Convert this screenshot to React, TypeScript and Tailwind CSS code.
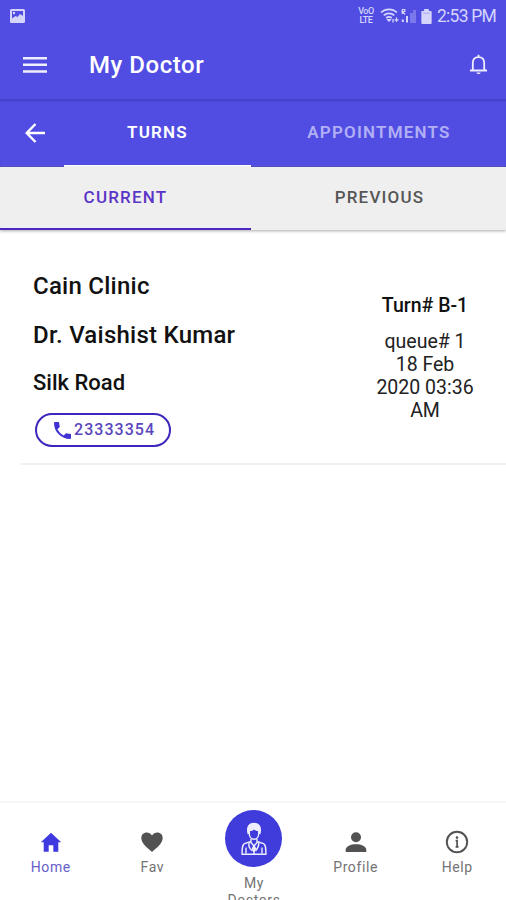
import { ReactNode } from 'react';

function HomeIcon() {
  return (
    <svg viewBox="0 0 24 24" className="h-6 w-6" fill="currentColor">
      <path d="M12 2.800 1.800 12.200h2.900v9.600h5v-6.600h4.600v6.600h5v-9.600h2.900z" />
    </svg>
  );
}

function HeartIcon() {
  return (
    <svg viewBox="0 0 24 24" className="h-6 w-6" fill="currentColor">
      <path d="M12 22C8 18.300 1.300 13.600 1.300 8c0-3.200 2.300-5.500 5.300-5.500 2.200 0 4.200 1.100 5.400 3.100 1.200-2 3.200-3.100 5.400-3.100 3 0 5.300 2.300 5.300 5.500C22.700 13.600 16 18.300 12 22z" />
    </svg>
  );
}

function PersonIcon() {
  return (
    <svg viewBox="0 0 24 24" className="h-6 w-6" fill="currentColor">
      <circle cx="12" cy="7.300" r="5" />
      <path d="M1.700 22v-2.200c0-3.600 5.200-5.600 10.300-5.600s10.300 2 10.300 5.600V22z" />
    </svg>
  );
}

function InfoIcon() {
  return (
    <svg viewBox="0 0 24 24" className="h-6 w-6" fill="none" stroke="currentColor" strokeWidth="1.900">
      <circle cx="12" cy="12" r="10.200" />
      <path d="M10.600 10.600h1.500v6.100M10.600 16.900h3" strokeWidth="1.700" />
      <circle cx="12" cy="7.600" r="1.300" fill="currentColor" stroke="none" />
    </svg>
  );
}

function DoctorIcon() {
  return (
    <svg viewBox="0 0 28 34" className="h-[34px] w-7" fill="none" stroke="#eeeeff" strokeWidth="1.400" strokeLinejoin="round">
      <path d="M8.300 12C6.500 5 9 1.500 14 1.500S21.500 5 19.700 12" fill="#eeeeff" />
      <path d="M9.300 8.500v3c0 3.200 1.900 5.700 4.700 5.700s4.700-2.500 4.700-5.700v-3c-1.700 0-3.700-.8-4.700-2-1 1.200-3 2-4.700 2z" fill="#403cdb" />
      <path d="M11 17v2.500l-6.500 2.200c-2 .8-2.300 3-2.500 10.500h24c-.2-7.500-.5-9.700-2.500-10.500L17 19.500V17" />
      <path d="m10.500 20 3.500 4 3.500-4M9.500 20.500c-2 3.500 0 6 3 8.500M18.500 20.500c1 3-1 6-3 8.500M6 25.500v6M22 25.500v6M14 28v4" />
      <path d="m14 23.500-1.500 3 1.500 3 1.500-3z" fill="#eeeeff" />
    </svg>
  );
}

function StatusBar() {
  return (
    <div className="flex h-8 items-center justify-between pl-[9px] pr-[10px] text-[#d5d5fc]">
      <svg viewBox="0 0 17 16" className="h-4 w-[17px]">
        <rect x="1" y="1" width="15" height="14" rx="1.500" fill="currentColor" />
        <path d="M3 3h11v5l-3-2-2.500 3-2-1L3 10.500z" fill="#514de3" />
        <circle cx="5" cy="5" r="1.200" fill="currentColor" />
      </svg>
      <div className="flex h-8 items-center">
        <div className="mr-[6px] w-4 text-center text-[9px] font-medium leading-[9px] tracking-[-0.400px]">
          <div>VoO</div>
          <div>LTE</div>
        </div>
        <svg viewBox="0 0 40 18" className="mr-px h-[18px] w-10" fill="none" stroke="currentColor">
          <path d="M1 5.500c4.500-4.300 11.500-4.300 16 0M3.700 8.400c3-2.800 7.600-2.800 10.600 0M6.200 11c1.700-1.400 3.900-1.400 5.600 0" strokeWidth="1.700" />
          <path d="m9 14.500-2-2h4z" fill="currentColor" />
          <path d="M13 12v3.500M16.500 10.500v4.500M14.500 12.800h4" strokeWidth="1.300" />
          <path d="M22.300 7V2.500h2.500v2h-2.500l2.800 2.800" strokeWidth="1.200" />
          <path d="M22.800 12.500V15M27 9v6.500" strokeWidth="2" />
          <path d="M31.500 16V6M34.500 16V3" strokeWidth="2.800" opacity=".35" />
        </svg>
        <svg viewBox="0 0 11 16" className="mr-[5px] h-[15px] w-[11px]" fill="currentColor">
          <path d="M3 0h5v2h2a1 1 0 0 1 1 1v12a1 1 0 0 1-1 1H1a1 1 0 0 1-1-1V3a1 1 0 0 1 1-1h2z" />
          <path d="M2 4.500h7" stroke="#a5a2f5" />
        </svg>
        <span className="w-[59px] whitespace-nowrap text-[17.500px] tracking-[-0.750px]">2:53 PM</span>
      </div>
    </div>
  );
}

function NavItem({ icon, label, active }: { icon: ReactNode; label: string; active?: boolean }) {
  return (
    <button
      className={`flex flex-1 flex-col items-center pt-[27px] text-[14px] leading-[18px] tracking-[0.600px] ${
        active ? 'text-[#6660c8]' : 'text-[#737373]'
      }`}
    >
      <span className={active ? 'text-[#3f3ae0]' : 'text-[#525252]'}>{icon}</span>
      <span className="mt-[4px]">{label}</span>
    </button>
  );
}

export default function App() {
  return (
    <div className="flex h-[900px] w-[506px] flex-col overflow-hidden bg-white font-[Roboto,sans-serif] text-[#111]">
      {/* Header */}
      <header className="h-[99px] shrink-0 bg-[#514de3] text-white">
        <StatusBar />
        <div className="flex h-[65px] items-center pl-[23px] pr-[18px]">
          <svg viewBox="0 0 24 18" className="h-[18px] w-6" stroke="#eeeeff" strokeWidth="2.400">
            <path d="M0 2.200h24M0 8.800h24M0 15.500h24" />
          </svg>
          <h1 className="ml-[42px] text-[24px] font-medium tracking-[0.550px]">My Doctor</h1>
          <svg viewBox="0 0 20 22" className="ml-auto h-[21px] w-[19px]" fill="none" stroke="#eeeeff" strokeWidth="1.900">
            <path d="M1 17.300h18M4 17V9.500C4 5.500 6.500 3.200 10 3.200s6 2.300 6 6.300V17M10 3V.8" />
            <path d="M7.800 19.300h4.400a2.200 1.800 0 0 1-4.400 0z" fill="#eeeeff" stroke="none" />
          </svg>
        </div>
      </header>

      {/* Main tabs */}
      <div className="flex h-[68px] shrink-0 border-b border-[#4139bd] bg-[#514de3] text-[17px] font-semibold tracking-[1.200px] shadow-[inset_0_3px_2px_-1px_#443fc5]">
        <button className="flex w-16 items-center pl-[25px]">
          <svg viewBox="0 0 20 20" className="h-5 w-5" fill="none" stroke="white" strokeWidth="2.400">
            <path d="M20 10H2M10.500 1 1.700 10l8.800 9" />
          </svg>
        </button>
        <button className="-mb-px w-[187px] border-b-2 border-white pt-px text-white">TURNS</button>
        <button className="flex-1 pl-px text-[#b2b0f5]">APPOINTMENTS</button>
      </div>

      {/* Segment */}
      <div className="z-10 flex h-[63px] shrink-0 bg-[#efefef] text-[17px] font-medium tracking-[1.200px] shadow-[0_1px_3px_#aaa]">
        <button className="w-[251px] border-b-2 border-[#4c27c0] text-[#5b35c8]">CURRENT</button>
        <button className="flex-1 pb-[2px] pl-[2px] text-[#565656]">PREVIOUS</button>
      </div>

      <main className="flex-1">
        <section className="ml-[21px] flex h-[235px] justify-between border-b-2 border-[#f0f0f0] pl-3 pr-[25px]">
          <div className="flex flex-col items-start pt-[41px] font-medium">
            <p className="text-[24px] leading-[30px] tracking-[0.250px]">Cain Clinic</p>
            <p className="mt-[19px] text-[24px] leading-[30px] tracking-[0.250px]">Dr. Vaishist Kumar</p>
            <p className="mt-[18px] text-[22px] leading-[30px]">Silk Road</p>
            <button className="ml-[2px] mt-[15px] flex h-[34px] w-[136px] items-center rounded-full border-2 border-[#3b27bd] pl-[17px] text-[16px] tracking-[1.050px] text-[#5a47bd]">
              <svg viewBox="0 0 18 18" className="mr-[3px] h-[17px] w-[17px] text-[#4132d3]" fill="currentColor">
                <path d="M3.600 7.800a15.100 15.100 0 0 0 6.600 6.600l2.200-2.200a1 1 0 0 1 1-.24 11.400 11.400 0 0 0 3.600.57 1 1 0 0 1 1 1V17a1 1 0 0 1-1 1A17 17 0 0 1 0 1a1 1 0 0 1 1-1h3.500a1 1 0 0 1 1 1c0 1.250.2 2.450.57 3.570a1 1 0 0 1-.25 1z" />
              </svg>
              23333354
            </button>
          </div>
          <div className="w-[112px] pt-[63px] text-center">
            <p className="text-[19.500px] font-medium leading-[26px]">Turn# B-1</p>
            <p className="mt-[11px] text-[19.500px] leading-[23px] text-[#222]">
              queue# 1<br />18 Feb<br />2020 03:36<br />AM
            </p>
          </div>
        </section>
      </main>

      {/* Bottom navigation */}
      <nav className="-mr-[2px] flex h-[99px] shrink-0 border-t-2 border-[#f5f5f5]">
        <NavItem icon={<HomeIcon />} label="Home" active />
        <NavItem icon={<HeartIcon />} label="Fav" />
        <button className="flex flex-1 flex-col items-center pt-[7px] text-[14px] leading-[17px] tracking-[0.600px] text-[#737373]">
          <span className="flex h-[57px] w-[57px] shrink-0 items-center justify-center rounded-full bg-[#403cdb]">
            <DoctorIcon />
          </span>
          <span className="mt-[8px]">My<br />Doctors</span>
        </button>
        <NavItem icon={<PersonIcon />} label="Profile" />
        <NavItem icon={<InfoIcon />} label="Help" />
      </nav>
    </div>
  );
}
